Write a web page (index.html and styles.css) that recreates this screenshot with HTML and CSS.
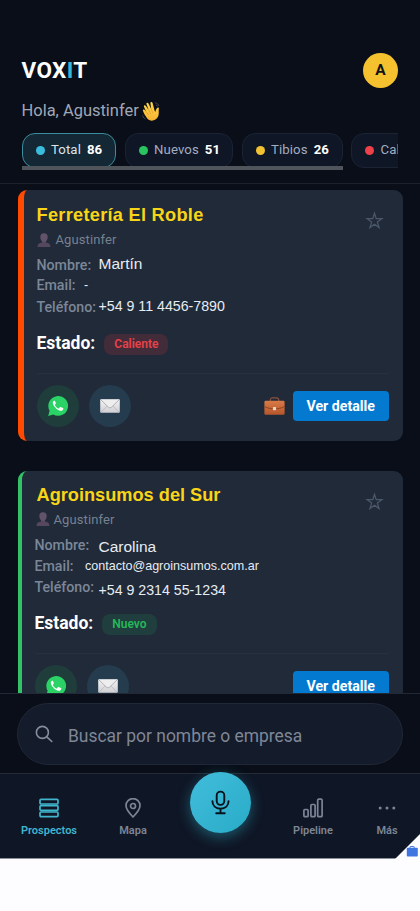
FILE: index.html
```html
<!DOCTYPE html>
<html lang="es">
<head>
<meta charset="utf-8">
<meta name="viewport" content="width=device-width, initial-scale=1">
<title>VOXIT</title>
<link rel="stylesheet" href="styles.css">
</head>
<body>
<svg class="defs" aria-hidden="true">
  <defs>
    <linearGradient id="mailFill" x1="0" y1="0" x2="0" y2="1"><stop offset="0" stop-color="#f4f3f5"/><stop offset="1" stop-color="#cfced3"/></linearGradient>
    <linearGradient id="bagFill" x1="0" y1="0" x2="0" y2="1"><stop offset="0" stop-color="#d97b47"/><stop offset="1" stop-color="#b4562b"/></linearGradient>
    <linearGradient id="handFill" x1="0" y1="0" x2="0" y2="1"><stop offset="0" stop-color="#ffd54b"/><stop offset="1" stop-color="#f6b331"/></linearGradient>
    <symbol id="person" viewBox="0 0 14 14">
      <path d="M.6 14c0-3 1.200-3.900 4.500-4.500V7.800h3.800v1.700c3.300.6 4.500 1.500 4.500 4.500z" fill="#55475e"/>
      <path d="M7 .2c2.500 0 3.900 1.600 3.700 4.200C10.500 7 9 8.900 7 8.900S3.500 7 3.300 4.400C3.100 1.800 4.500.2 7 .2z" fill="#63536a"/>
    </symbol>
    <symbol id="whatsapp" viewBox="0 0 20 20">
      <path d="M.2 19.900l1.400-5.100A9.900 9.900 0 1 1 5.300 18.500z" fill="#2bd366"/>
      <path d="M7.100 5.200c-.3-.5-.7-.5-1.100-.4C5 5.300 4.700 6.200 4.900 7.400c.4 2.200 3.700 6.300 7.100 7.300 1.700.5 3.100-.5 3.300-1.900 0-.4 0-.6-.3-.7l-2.400-1.100c-.3-.1-.5 0-.7.2l-.9 1.100c-.2.2-.4.2-.7.1-1.300-.6-2.600-1.700-3.400-3.200-.1-.2-.1-.4.1-.6l.8-1c.1-.2.100-.4 0-.6z" fill="#fff"/>
    </symbol>
    <symbol id="mail" viewBox="0 0 20 14">
      <rect x=".2" y=".2" width="19.600" height="13.600" rx="1" fill="url(#mailFill)"/>
      <path d="M.8 13.300L7.500 6.700M19.200 13.300l-6.700-6.600" stroke="#b3b2b8" stroke-width=".7"/>
      <path d="M.7.700l7.700 7.400c1 .9 2.200.9 3.200 0L19.300.7" fill="#efeeef" stroke="#a3a2a9" stroke-width=".8"/>
    </symbol>
    <symbol id="briefcase" viewBox="0 0 21 18">
      <path d="M6.300 4.200V3c0-1.500.8-2.200 2.200-2.200h4c1.400 0 2.200.7 2.200 2.200v1.200" fill="none" stroke="#8a5040" stroke-width="1.200"/>
      <rect x=".4" y="3.700" width="20.200" height="14.100" rx="1.300" fill="url(#bagFill)"/>
      <path d="M.5 9.500c3.500 2 7 2.300 10 2.300s6.500-.3 10-2.300" fill="none" stroke="#8d4123" stroke-width=".9"/>
      <rect x="8.900" y="10" width="3.200" height="3.200" rx=".7" fill="#ecd7bc"/>
    </symbol>
    <symbol id="star" viewBox="0 0 18 18">
      <path d="M9 2.300l1.600 5h5.400l-4.300 3.200 1.600 5.200L9 12.500l-4.300 3.200 1.600-5.200L2 7.300h5.400z" fill="none" stroke="#4b586b" stroke-width="1.200"/>
    </symbol>
  </defs>
</svg>

<div class="app">
  <header class="header">
    <div class="topbar">
      <h1 class="logo">VOX<span>I</span>T</h1>
      <div class="avatar">A</div>
    </div>
    <p class="greeting">Hola, Agustinfer
      <svg class="wave" viewBox="0 0 20 20">
        <path d="M5.300 17.600C3.600 15.200 1.300 11.700.9 9.600c-.2-1.300 1.300-1.600 2-.6l1.500 2L2 5.900c-.6-1.400 1.100-2.300 1.900-.9L6.700 9 4.500 3.200C4 1.700 5.800 1 6.500 2.400L9.200 8 8.400 2.300C8.300.8 10.200.6 10.600 2l2 7.700.7 1.200c.5-1.700.9-3.500 2.200-4.200.9-.4 1.600.3 1.400 1.300-.5 2 .4 5-.8 7.600-1.900 4.300-7.800 5.700-10.800 2z" fill="url(#handFill)"/>
        <path d="M4.400 11l2.300 2.900M6.700 9l2 3.800M9.200 8l1.500 3.800" fill="none" stroke="#df962b" stroke-width=".7"/>
        <path d="M13.300 1.900c1.700.2 3 1.300 3.500 2.900M14 4c.7.200 1.200.7 1.400 1.400M.7 14.400c.2 1.600 1.200 2.900 2.600 3.400" fill="none" stroke="#50545c" stroke-width=".9"/>
      </svg>
    </p>
    <div class="chips">
      <div class="chip active"><i class="dot cyan"></i><span>Total</span><b>86</b></div>
      <div class="chip nuevos"><i class="dot green"></i><span>Nuevos</span><b>51</b></div>
      <div class="chip tibios"><i class="dot yellow"></i><span>Tibios</span><b>26</b></div>
      <div class="chip calientes"><i class="dot red"></i><span>Cal</span></div>
      <div class="scrollbar"></div>
    </div>
  </header>

  <main class="list">
    <article class="card hot">
      <div class="card-head"><h2>Ferretería El Roble</h2><svg class="star"><use href="#star"/></svg></div>
      <div class="owner"><svg><use href="#person"/></svg><span>Agustinfer</span></div>
      <div class="field name"><span>Nombre:</span><em>Martín</em></div>
      <div class="field email"><span>Email:</span><em>-</em></div>
      <div class="field phone"><span>Teléfono:</span><em>+54 9 11 4456-7890</em></div>
      <div class="state"><strong>Estado:</strong><span class="badge">Caliente</span></div>
      <div class="actions">
        <div class="round wa"><svg><use href="#whatsapp"/></svg></div>
        <div class="round mail"><svg><use href="#mail"/></svg></div>
        <svg class="bag"><use href="#briefcase"/></svg>
        <button class="detail">Ver detalle</button>
      </div>
    </article>
    <article class="card new">
      <div class="card-head"><h2>Agroinsumos del Sur</h2><svg class="star"><use href="#star"/></svg></div>
      <div class="owner"><svg><use href="#person"/></svg><span>Agustinfer</span></div>
      <div class="field name"><span>Nombre:</span><em>Carolina</em></div>
      <div class="field email"><span>Email:</span><em>contacto@agroinsumos.com.ar</em></div>
      <div class="field phone"><span>Teléfono:</span><em>+54 9 2314 55-1234</em></div>
      <div class="state"><strong>Estado:</strong><span class="badge">Nuevo</span></div>
      <div class="actions">
        <div class="round wa"><svg><use href="#whatsapp"/></svg></div>
        <div class="round mail"><svg><use href="#mail"/></svg></div>
        <button class="detail">Ver detalle</button>
      </div>
    </article>
  </main>

  <section class="search-area">
    <div class="search">
      <svg viewBox="0 0 18 18"><circle cx="7.400" cy="7.400" r="6" /><path d="M11.800 11.800l5 4.700"/></svg>
      <span>Buscar por nombre o empresa</span>
    </div>
  </section>

  <nav class="nav">
    <div class="tab prospects">
      <svg viewBox="0 0 20 20"><rect x="1" y="1.400" width="18" height="4.600" rx="1"/><rect x="1" y="7.700" width="18" height="4.600" rx="1"/><rect x="1" y="14" width="18" height="4.600" rx="1"/></svg>
      <span>Prospectos</span>
    </div>
    <div class="tab map">
      <svg viewBox="0 0 20 20"><path d="M10 19C7 16 3 11.800 3 7.600a7 7 0 0 1 14 0C17 11.800 13 16 10 19z"/><circle cx="10" cy="8" r="2.500"/></svg>
      <span>Mapa</span>
    </div>
    <div class="mic">
      <svg viewBox="0 0 20 26"><rect x="6" y="1.500" width="8" height="14" rx="4"/><path d="M1.500 11.500c0 4.800 3.500 8 8.500 8s8.500-3.200 8.500-8M10 19.500V24M5.500 24.300h9"/></svg>
    </div>
    <div class="tab pipeline">
      <svg viewBox="0 0 20 20"><rect x=".9" y="11.500" width="4.200" height="7.200" rx="1"/><rect x="7.900" y="6.500" width="4.200" height="12.200" rx="1"/><rect x="14.700" y="1.200" width="4.400" height="17.500" rx="1"/></svg>
      <span>Pipeline</span>
    </div>
    <div class="tab more">
      <svg viewBox="0 0 20 20"><g class="dots"><circle cx="3.200" cy="10" r="1.500"/><circle cx="10" cy="10" r="1.500"/><circle cx="16.800" cy="10" r="1.500"/></g></svg>
      <span>Más</span>
    </div>
    <svg class="corner" viewBox="0 0 25 25"><path d="M25 0v25H0z" fill="#fdfcff"/><path d="M15 14v-.9q0-.6.600-.6h3q.6 0 .6.600v.9" fill="none" stroke="#3f76e0" stroke-width="1"/><rect x="11.800" y="13.800" width="11" height="8.700" rx="1" fill="#3f76e0"/></svg>
  </nav>
</div>
</body>
</html>
```
FILE: styles.css
```css
* { box-sizing: border-box; }
html, body { margin: 0; height: 911px; overflow: hidden; }
body { background: #fdfcff; font-family: Roboto, sans-serif; color: #fff; }
h1, h2, p { margin: 0; }
svg { display: block; flex: none; }
.defs { position: absolute; width: 0; height: 0; }
.app { width: 420px; height: 858.5px; background: #090e18; display: flex; flex-direction: column; }

.header { height: 184px; padding: 53px 22px 0 21.500px; border-bottom: 1px solid #1b212d; flex: none; }
.topbar { height: 35px; display: flex; justify-content: space-between; align-items: center; }
.logo { font-size: 22.500px; line-height: 35px; font-weight: 700; letter-spacing: .35px; }
.logo span { color: #35b8d4; }
.avatar { width: 35px; height: 35px; border-radius: 50%; background: #f5c12e; color: #10131a; font-size: 15.500px; font-weight: 700; line-height: 35px; text-align: center; }
.greeting { display: flex; height: 45px; align-items: center; gap: 3.500px; font-size: 16.500px; line-height: 24px; color: #a0a7b6; white-space: nowrap; letter-spacing: -.02px; }
.wave { width: 20px; height: 20px; }
.chips { position: relative; display: flex; gap: 8.500px; overflow: hidden; height: 37px; }
.chip { flex: none; height: 34.500px; border: 1px solid #1b2334; border-radius: 13px; background: #0f1626; display: flex; align-items: center; padding: 0 0 0 13px; font-size: 13.200px; line-height: 16px; letter-spacing: .1px; color: #a3adc0; white-space: nowrap; }
.chip span { margin-left: 6.500px; }
.chip b { margin-left: 6px; color: #fff; letter-spacing: 0; }
.dot { width: 9px; height: 9px; border-radius: 50%; }
.active { width: 94.500px; background: #132735; border-color: #3a8c9e; color: #dbe3eb; }
.nuevos { width: 108.500px; }
.tibios { width: 101px; }
.calientes { width: 120px; }
.cyan { background: #3bbcdc; }
.green { background: #29c45f; }
.yellow { background: #f2c232; }
.red { background: #ed4049; }
.scrollbar { position: absolute; left: 0; bottom: 0; width: 321.500px; height: 4px; background: #50545b; }

.list { height: 509px; flex: none; overflow: hidden; padding: 6px 17.500px 0; display: flex; flex-direction: column; gap: 30px; background: #090e18; }
.card { flex: none; height: 250.500px; background: #202a38; border-radius: 9px; padding: 12px 14px 0 13px; display: flex; flex-direction: column; }
.hot { border-left: 6.500px solid #ff4a00; }
.new { border-left: 4.500px solid #32c367; }
.card-head { height: 26px; display: flex; justify-content: space-between; }
.card-head h2 { font: 700 18.200px/25px "Liberation Sans", sans-serif; color: #f8d517; white-space: nowrap; }
.hot h2 { letter-spacing: .28px; line-height: 27px; }
.new h2 { margin-left: 2px; letter-spacing: 0; }
.star { width: 19px; height: 19px; margin: 9px 4.500px 0 0; }
.owner { height: 26px; display: flex; align-items: center; font-size: 13px; color: #778191; padding: 0 0 3px 0; letter-spacing: .1px; }
.new .owner { padding-bottom: 5px; padding-left: 1px; }
.owner svg { width: 14px; height: 14px; margin-right: 5px; }
.new .owner svg { margin-right: 4px; }
.field { height: 21.200px; display: flex; line-height: 21px; font-size: 14.200px; font-weight: 500; color: #7b8798; white-space: nowrap; }
.hot .phone, .hot .name { line-height: 22px; }
.field em { font-style: normal; font-weight: 400; font-family: "Liberation Sans", sans-serif; color: #e7ecf4; }
.field span { width: 62px; flex: none; }
.email span { width: 47.500px; }
.new .field span { width: 64px; }
.new .email span { width: 50.500px; }
.name em { font-size: 15.500px; }
.hot .name em { line-height: 20px; }
.phone em { font-size: 14.200px; }
.hot .phone em { line-height: 21px; }
.email em { font-size: 12.550px; }
.new .phone em { line-height: 27px; }
.new .name em { line-height: 23px; }
.state { height: 33px; display: flex; align-items: center; }
.hot .state { margin-top: 10px; }
.new .state { margin-top: 9.500px; }
.state strong { font-size: 17.500px; line-height: 22px; padding-bottom: 3px; }
.badge { height: 21px; margin-left: 9px; padding: 0 10px; border-radius: 8px; font-size: 12px; line-height: 21px; font-weight: 600; letter-spacing: 0; }
.hot .badge { color: #e84249; background: #432c39; }
.new .badge { color: #25b85a; background: #203e3e; }
.actions { border-top: 1px solid #263140; padding-top: 11px; display: flex; align-items: center; }
.hot .actions { margin-top: 12px; }
.new .actions { margin-top: 12.500px; }
.round { width: 42px; height: 42px; border-radius: 50%; display: grid; place-items: center; margin-right: 10.500px; flex: none; }
.wa { background: #1f3d3b; }
.mail { background: #243c4e; }
.wa svg { width: 20px; height: 20px; }
.mail svg { width: 20px; height: 14px; }
.bag { width: 21px; height: 18px; margin-left: auto; margin-right: 8.500px; }
.detail { width: 95.500px; height: 30px; border: 0; border-radius: 4px; background: #037ad0; color: #fff; font: 700 14.200px/30px Roboto, sans-serif; padding: 0; }
.new .detail { margin-left: auto; }

.search-area { height: 80px; flex: none; border-top: 1px solid #222936; padding: 9px 17px 0; }
.search { height: 61.500px; border: 1px solid #202737; border-radius: 31px; background: #141b2a; display: flex; align-items: center; padding-left: 17px; color: #7f8797; font-size: 17.450px; white-space: nowrap; }
.search svg { width: 18px; height: 18px; margin-right: 15px; fill: none; stroke: #858d9b; stroke-width: 1.600; stroke-linecap: round; }
.search span { padding-top: 4px; }

.nav { position: relative; height: 85.500px; flex: none; background: #0f1625; border-top: 1px solid #242b37; border-bottom: 1px solid #8c9097; display: flex; padding-left: 14px; }
.tab { display: flex; flex-direction: column; align-items: center; padding-top: 24px; font-size: 11px; line-height: 15px; font-weight: 600; color: #7c8595; }
.tab svg { width: 20px; height: 20px; margin-bottom: 5px; fill: none; stroke: currentColor; stroke-width: 1.700; stroke-linejoin: round; }
.tab .dots { fill: currentColor; stroke: none; }
.prospects { width: 70px; color: #40b5cd; }
.map { width: 98px; }
.mic { width: 61px; height: 61px; margin: -2.500px 0 0 7.500px; border-radius: 50%; background: linear-gradient(135deg, #42bddb, #28abc7); box-shadow: 0 4px 14px rgba(48, 184, 208, .42); display: grid; place-items: center; }
.mic svg { width: 19px; height: 25px; fill: none; stroke: #08121d; stroke-width: 2; stroke-linecap: round; }
.pipeline { width: 125px; }
.more { width: 23px; }
.corner { position: absolute; right: 0; bottom: -1px; width: 25px; height: 25px; }
```
